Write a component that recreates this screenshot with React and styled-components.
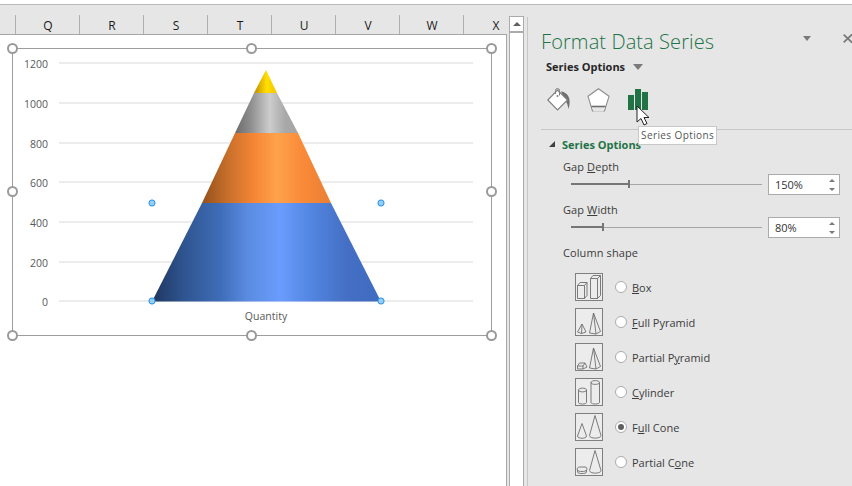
import { createGlobalStyle, styled } from "styled-components";

const GlobalStyle = createGlobalStyle`
  html, body {
    margin: 0;
    padding: 0;
    background: #fff;
    font-family: "Open Sans", "Liberation Sans", sans-serif;
  }
`;

const Window = styled.div`
  position: relative;
  width: 852px;
  height: 486px;
  overflow: hidden;
  background: #fff;
`;

const TopStrip = styled.div`
  height: 4px;
  border-bottom: 1px solid #b9b9b9;
`;

const Main = styled.div`
  display: flex;
  height: 481px;
  background: #e6e6e6;
`;

const SheetColumn = styled.div`
  width: 507px;
  flex-shrink: 0;
  display: flex;
  flex-direction: column;
  overflow: hidden;
`;

const ColHeaders = styled.div`
  display: flex;
  height: 29px;
  flex-shrink: 0;
  padding-left: 15px;
  border-bottom: 1px solid #a6a6a6;
`;

const ColCell = styled.div`
  width: 64px;
  flex-shrink: 0;
  box-sizing: border-box;
  margin-top: 10px;
  padding: 1px 0 0 1px;
  border-left: 1px solid #b0b0b0;
  display: flex;
  align-items: center;
  justify-content: center;
  font-size: 12px;
  color: #1a1a1a;
`;

const Sheet = styled.div`
  flex: 1;
  background: #fff;
  padding: 13px 0 0 12px;
  border-right: 1px solid #a6a6a6;
`;

const ChartFrame = styled.div`
  position: relative;
  width: 480px;
  height: 288px;
  box-sizing: border-box;
  border: 1px solid #9d9d9d;
`;

const Plot = styled.svg`
  display: block;
  position: absolute;
  left: -1px;
  top: -1px;
  font-family: "Open Sans", sans-serif;
`;

const Handle = styled.span`
  position: absolute;
  left: ${(p) => p.$x}px;
  top: ${(p) => p.$y}px;
  width: 11px;
  height: 11px;
  box-sizing: border-box;
  margin: -6px 0 0 -6px;
  border: 2px solid #9a9a9a;
  border-radius: 50%;
  background: #fff;
`;

const ScrollGutter = styled.div`
  width: 20px;
  flex-shrink: 0;
  box-sizing: border-box;
  padding: 11px 3px 0 2px;
`;

const ScrollTrack = styled.div`
  height: 100%;
  box-sizing: border-box;
  border: 1px solid #ababab;
  border-bottom: 0;
  background: #fff;
`;

const ScrollButton = styled.div`
  height: 14px;
  border-bottom: 2px solid #ababab;
  display: flex;
  align-items: center;
  justify-content: center;

  &::before {
    content: "";
    border-left: 4px solid transparent;
    border-right: 4px solid transparent;
    border-bottom: 4px solid #606060;
  }
`;

const PanelEdge = styled.div`
  width: 1px;
  flex-shrink: 0;
  margin-top: 12px;
  background: #c6c6c6;
`;

const Panel = styled.div`
  position: relative;
  flex: 1;
  min-width: 0;
  padding-top: 20px;
  color: #3c3c3c;
  font-size: 11px;
`;

const TitleRow = styled.div`
  display: flex;
  align-items: center;
  padding-left: 13px;
  height: 32px;
`;

const Title = styled.div`
  flex: 1;
  font-size: 20px;
  font-weight: 300;
  letter-spacing: 0.1px;
  color: #217346;
  white-space: nowrap;
`;

const PanelCaret = styled.span`
  border-left: 4px solid transparent;
  border-right: 4px solid transparent;
  border-top: 5px solid #7a7a7a;
  margin: 0 32px 6px 0;
`;

const CloseIcon = styled.svg`
  display: block;
  margin-bottom: 6px;
`;

const OptionsMenu = styled.div`
  display: flex;
  align-items: center;
  gap: 8px;
  height: 19px;
  padding-left: 18px;
  font-weight: 700;
  font-size: 11px;
  color: #262626;
`;

const MenuCaret = styled.span`
  border-left: 5px solid transparent;
  border-right: 5px solid transparent;
  border-top: 6px solid #7a7a7a;
`;

const TabIcons = styled.div`
  display: flex;
  height: 24px;
  padding: 12px 0 0 19px;
  gap: 16px;
`;

const Divider = styled.div`
  height: 1px;
  margin: 17px 0 0 13px;
  background: #c6c6c6;
`;

const SectionHead = styled.div`
  display: flex;
  align-items: center;
  height: 18px;
  margin-top: 5px;
  padding-left: 21px;
  gap: 7px;
  font-weight: 700;
  font-size: 11px;
  color: #217346;
`;

const SectionArrow = styled.span`
  width: 0;
  height: 0;
  border-left: 6px solid transparent;
  border-bottom: 6px solid #404040;
`;

const Field = styled.div`
  padding-left: 35px;
  margin-top: ${(p) => p.$top}px;
  height: 16px;
  line-height: 16px;
  letter-spacing: 0.1px;
`;

const SliderRow = styled.div`
  display: flex;
  align-items: center;
  height: 21px;
  margin-top: -1px;
  padding-left: 43px;
  gap: 6px;
`;

const SliderTrack = styled.div`
  position: relative;
  width: 191px;
  height: 1px;
  background: #a6a6a6;
`;

const SliderFill = styled.div`
  position: absolute;
  left: 0;
  top: -1px;
  width: ${(p) => p.$w}px;
  height: 2px;
  background: #767676;

  &::after {
    content: "";
    position: absolute;
    right: -1px;
    top: -3px;
    width: 2px;
    height: 8px;
    background: #767676;
  }
`;

const SpinBox = styled.div`
  width: 72px;
  height: 21px;
  box-sizing: border-box;
  display: flex;
  align-items: center;
  justify-content: space-between;
  padding: 0 4px 0 6px;
  border: 1px solid #ababab;
  background: #fff;
  color: #333;
`;

const Spinner = styled.div`
  display: flex;
  flex-direction: column;
  gap: 6px;
`;

const SpinUp = styled.span`
  display: block;
  border-left: 3px solid transparent;
  border-right: 3px solid transparent;
  border-bottom: 3px solid #777;
`;

const SpinDown = styled.span`
  display: block;
  border-left: 3px solid transparent;
  border-right: 3px solid transparent;
  border-top: 3px solid #777;
`;

const ShapeList = styled.div`
  display: flex;
  flex-direction: column;
  gap: 7px;
  margin-top: 12px;
  padding-left: 47px;
`;

const ShapeRow = styled.div`
  display: flex;
  align-items: center;
  height: 28px;
`;

const ShapeThumb = styled.svg`
  display: block;
  width: 28px;
  height: 28px;
  flex-shrink: 0;
  margin-right: 12px;
`;

const Radio = styled.span`
  width: 12px;
  height: 12px;
  box-sizing: border-box;
  flex-shrink: 0;
  margin: -1px 5px 0 0;
  border: 1px solid #ababab;
  border-radius: 50%;
  background: #fff;
  display: flex;
  align-items: center;
  justify-content: center;

  &::after {
    content: "";
    width: 6px;
    height: 6px;
    border-radius: 50%;
    background: ${(p) => (p.$on ? "#606060" : "transparent")};
  }
`;

const Tooltip = styled.div`
  position: absolute;
  left: 110px;
  top: 121px;
  padding: 0 2px;
  height: 19px;
  line-height: 16px;
  box-sizing: border-box;
  border: 1px solid #c8c8c8;
  background: #fff;
  font-size: 10px;
  letter-spacing: 0.4px;
  color: #555;
  white-space: nowrap;
`;

const Cursor = styled.svg`
  position: absolute;
  left: 108px;
  top: 100px;
`;

const columns = ["Q", "R", "S", "T", "U", "V", "W", "X"];
const ticks = [
  [1200, 15],
  [1000, 55],
  [800, 95],
  [600, 134],
  [400, 174],
  [200, 214],
  [0, 253],
];
const handles = [
  [0, 0],
  [239, 0],
  [479, 0],
  [0, 143],
  [479, 143],
  [0, 287],
  [239, 287],
  [479, 287],
];
const dots = [
  [140, 155],
  [369, 155],
  [140, 253],
  [369, 253],
];

function ConeGradient({ id, stops }) {
  return (
    <linearGradient id={id} x1="0" y1="0" x2="1" y2="0">
      {stops.map(([at, color]) => (
        <stop key={at} offset={at} stopColor={color} />
      ))}
    </linearGradient>
  );
}

function ChartPlot() {
  return (
    <Plot width="480" height="288" viewBox="0 0 480 288">
      <defs>
        <ConeGradient
          id="blue"
          stops={[
            [0, "#1f3660"],
            [0.14, "#2f5590"],
            [0.3, "#3f6db8"],
            [0.42, "#5b8ce2"],
            [0.56, "#699cfc"],
            [0.7, "#5285e0"],
            [0.85, "#446fc4"],
            [1, "#3f6cc0"],
          ]}
        />
        <ConeGradient
          id="orange"
          stops={[
            [0, "#94501c"],
            [0.2, "#c76f2b"],
            [0.4, "#f58535"],
            [0.58, "#ffa24c"],
            [0.78, "#f98a38"],
            [1, "#e97f33"],
          ]}
        />
        <ConeGradient
          id="gray"
          stops={[
            [0, "#6b6b6b"],
            [0.25, "#8e8e8e"],
            [0.55, "#cccccc"],
            [0.8, "#a8a8a8"],
            [1, "#a5a5a5"],
          ]}
        />
        <ConeGradient
          id="gold"
          stops={[
            [0, "#b58f00"],
            [0.3, "#e6b800"],
            [0.55, "#ffdf00"],
            [1, "#f5c400"],
          ]}
        />
      </defs>
      {ticks.map(([label, y]) => (
        <g key={label}>
          <line x1="47" x2="461" y1={y} y2={y} stroke="#d9d9d9" strokeWidth="1.2" />
          <text x="36" y={y + 5} textAnchor="end" fontSize="10.5" fill="#595959">
            {label}
          </text>
        </g>
      ))}
      <polygon points="140,253.6 369,253.6 319,155 190,155" fill="url(#blue)" />
      <polygon points="190,155 319,155 286,85 223,85" fill="url(#orange)" />
      <polygon points="223,85 286,85 265,45 242,45" fill="url(#gray)" />
      <polygon points="242,45 265,45 254,22" fill="url(#gold)" />
      <text x="254" y="272" textAnchor="middle" fontSize="10.5" fill="#595959">
        Quantity
      </text>
      {dots.map(([x, y]) => (
        <circle key={`${x}-${y}`} cx={x} cy={y} r="3.1" fill="#8fd0f7" stroke="#2f8ee0" strokeWidth="1" />
      ))}
    </Plot>
  );
}

function BucketIcon() {
  return (
    <svg width="24" height="24" viewBox="0 0 24 24">
      <path d="M14 3.5 C19 4 22.6 8 22.6 13 C22.6 16 22.3 19 21.5 21 C21 18 20 14.5 18 12 Z" fill="#6e6e6e" />
      <path d="M10.5 2 L20.5 12 L10.5 22 L0.8 12 Z" fill="#fff" stroke="#808080" strokeWidth="1.2" />
      <path d="M8.5 6 V2.5 A2 2 0 0 1 12.5 2.5 V7.5" fill="none" stroke="#808080" strokeWidth="1" />
      <circle cx="10.5" cy="8" r="1" fill="#808080" />
    </svg>
  );
}

function PentagonIcon() {
  return (
    <svg width="24" height="24" viewBox="0 0 24 24">
      <path d="M11.5 0.7 L22 8.3 L17.5 23 H5.5 L1 8.3 Z" fill="#fff" stroke="#8c8c8c" strokeWidth="1.1" />
      <path d="M5.5 19 L6.5 23.5 H16.5 L17.5 19 Z" fill="#e6e6e6" />
      <path d="M4.5 18.5 H18.5" stroke="#6e6e6e" strokeWidth="1.6" />
    </svg>
  );
}

function BarsIcon() {
  return (
    <svg width="21" height="24" viewBox="-1 0 21 24">
      <path d="M0 7 H6 V22 H0 Z M7 1 H13 V22 H7 Z M14 4 H20 V22 H14 Z" fill="#217346" />
    </svg>
  );
}

const shapePaths = {
  box: "M2.5 12.5 H9.5 V25.5 H2.5 Z M2.5 12.5 L5 9.5 H12 V22.5 L9.5 25.5 M9.5 12.5 L12 9.5 M15.5 5.5 H22.5 V25.5 H15.5 Z M15.5 5.5 L18 2.5 H25.5 V22.5 L22.5 25.5 M22.5 5.5 L25.5 2.5",
  fullPyramid: "M7 16 L2.5 24 L6.5 25.5 L11 24 Z M7 16 L6.5 25.5 M18.5 5 L14.5 25 L21 26 L25.5 23.5 Z M18.5 5 L21 26",
  partialPyramid: "M4.5 20 H10 L12 24 L8 26 H2.5 L2.5 23 Z M2.5 23 H8 V26 M8 23 L10 20 M18.5 5 L14.5 25 L21 26 L25.5 23.5 Z M18.5 5 L21 26",
  cylinder: "M3.5 12 V24.5 C3.5 26.5 11.5 26.5 11.5 24.5 V12 M3.5 12 C3.5 9.5 11.5 9.5 11.5 12 C11.5 14.5 3.5 14.5 3.5 12 M16 4.5 V24.5 C16 26.5 24.5 26.5 24.5 24.5 V4.5 M16 4.5 C16 2 24.5 2 24.5 4.5 C24.5 7 16 7 16 4.5",
  fullCone: "M7 10.5 L2.5 23 C2.5 26 11.5 26 11.5 23 Z M20 2.5 L14.5 22.5 C14.5 26 26 26 26 22.5 Z",
  partialCone: "M4.5 19 H10 C12 19 12.5 21 11.5 22 V24 C11.5 26 2.5 26 2.5 24 V22 C1.5 21 2.5 19 4.5 19 Z M2.5 22 C2.5 24 11.5 24 11.5 22 M20 2.5 L14.5 22.5 C14.5 26 26 26 26 22.5 Z",
};

const shapes = [
  ["box", <><u>B</u>ox</>],
  ["fullPyramid", <><u>F</u>ull Pyramid</>],
  ["partialPyramid", <>Partial P<u>y</u>ramid</>],
  ["cylinder", <><u>C</u>ylinder</>],
  ["fullCone", <>F<u>u</u>ll Cone</>],
  ["partialCone", <>Partial C<u>o</u>ne</>],
];

function App() {
  return (
    <Window>
      <GlobalStyle />
      <TopStrip />
      <Main>
        <SheetColumn>
          <ColHeaders>
            {columns.map((c) => (
              <ColCell key={c}>{c}</ColCell>
            ))}
          </ColHeaders>
          <Sheet>
            <ChartFrame>
              <ChartPlot />
              {handles.map(([x, y]) => (
                <Handle key={`${x}-${y}`} $x={x} $y={y} />
              ))}
            </ChartFrame>
          </Sheet>
        </SheetColumn>
        <ScrollGutter>
          <ScrollTrack>
            <ScrollButton />
          </ScrollTrack>
        </ScrollGutter>
        <PanelEdge />
        <Panel>
          <TitleRow>
            <Title>Format Data Series</Title>
            <PanelCaret />
            <CloseIcon width="9" height="9" viewBox="0 0 9 9">
              <path d="M0.7 0.7 L9.5 9 M9.5 0 L0.7 8.3" stroke="#7a7a7a" strokeWidth="1.8" />
            </CloseIcon>
          </TitleRow>
          <OptionsMenu>
            Series Options
            <MenuCaret />
          </OptionsMenu>
          <TabIcons>
            <BucketIcon />
            <PentagonIcon />
            <BarsIcon />
          </TabIcons>
          <Divider />
          <SectionHead>
            <SectionArrow />
            Series Options
          </SectionHead>
          <Field $top={6}>
            Gap <u>D</u>epth
          </Field>
          <SliderRow>
            <SliderTrack>
              <SliderFill $w={58} />
            </SliderTrack>
            <SpinBox>
              150%
              <Spinner>
                <SpinUp />
                <SpinDown />
              </Spinner>
            </SpinBox>
          </SliderRow>
          <Field $top={7}>
            Gap <u>W</u>idth
          </Field>
          <SliderRow>
            <SliderTrack>
              <SliderFill $w={32} />
            </SliderTrack>
            <SpinBox>
              80%
              <Spinner>
                <SpinUp />
                <SpinDown />
              </Spinner>
            </SpinBox>
          </SliderRow>
          <Field $top={7}>Column shape</Field>
          <ShapeList>
            {shapes.map(([kind, label]) => (
              <ShapeRow key={kind}>
                <ShapeThumb viewBox="0 0 28 28">
                  <rect x="0.5" y="0.5" width="27" height="27" fill="#ececec" stroke="#7f7f7f" />
                  <path d={shapePaths[kind]} fill="none" stroke="#6e6e6e" strokeWidth="0.9" />
                </ShapeThumb>
                <Radio $on={kind === "fullCone"} />
                <span>{label}</span>
              </ShapeRow>
            ))}
          </ShapeList>
          <Cursor width="16" height="22" viewBox="0 0 16 22">
            <path d="M1 1 V17 L5 13.5 L8 20 L11 18.5 L8 12.5 H13 Z" fill="#fff" stroke="#222" strokeWidth="1" />
          </Cursor>
          <Tooltip>Series Options</Tooltip>
        </Panel>
      </Main>
    </Window>
  );
}

export default App;
